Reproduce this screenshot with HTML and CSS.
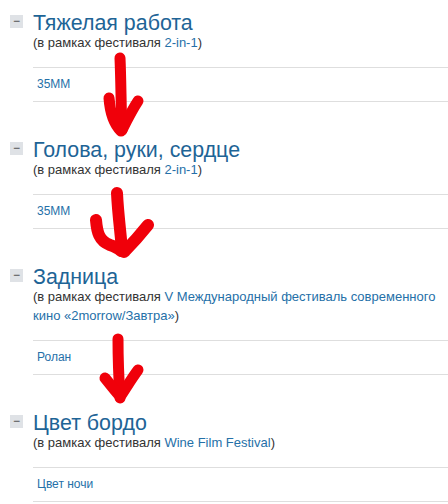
FILE: index.html
```html
<!DOCTYPE html>
<html lang="ru">
<head>
    <meta charset="UTF-8">
    <title>Фильмы</title>
    <link rel="stylesheet" href="styles.css">
</head>
<body>
<div class="page">
    <div class="film">
        <span class="toggle">−</span>
        <div class="film-body">
            <h2 class="film-title">Тяжелая работа</h2>
            <div class="film-fest">(в рамках фестиваля <a href="#">2-in-1</a>)</div>
            <ul class="related">
                <li><a href="#">35MM</a></li>
            </ul>
        </div>
    </div>
    <div class="film">
        <span class="toggle">−</span>
        <div class="film-body">
            <h2 class="film-title">Голова, руки, сердце</h2>
            <div class="film-fest">(в рамках фестиваля <a href="#">2-in-1</a>)</div>
            <ul class="related">
                <li><a href="#">35MM</a></li>
            </ul>
        </div>
    </div>
    <div class="film">
        <span class="toggle">−</span>
        <div class="film-body">
            <h2 class="film-title">Задница</h2>
            <div class="film-fest">(в рамках фестиваля <a href="#">V Международный фестиваль современного кино «2morrow/Завтра»</a>)</div>
            <ul class="related">
                <li><a href="#">Ролан</a></li>
            </ul>
        </div>
    </div>
    <div class="film">
        <span class="toggle">−</span>
        <div class="film-body">
            <h2 class="film-title">Цвет бордо</h2>
            <div class="film-fest">(в рамках фестиваля <a href="#">Wine Film Festival</a>)</div>
            <ul class="related">
                <li><a href="#">Цвет ночи</a></li>
            </ul>
        </div>
    </div>

    <!-- красные стрелки поверх -->
    <svg class="arrows" width="448" height="504" viewBox="0 0 448 504">
        <g fill="none" stroke="#f0000a" stroke-linecap="round" stroke-linejoin="round">
            <path stroke-width="11" d="M120 58 C121 80 121 108 122 130"/>
            <path stroke-width="11" d="M109 98 C110 112 114 124 121 131"/>
            <path stroke-width="11" d="M138 101 C132 110 127 120 122 130"/>

            <path stroke-width="12" d="M117 193 C118 215 121 235 122 251"/>
            <path stroke-width="12" d="M96 220 C97 232 99 241 110 245 C116 247 119 249 121 251"/>
            <path stroke-width="12" d="M148 225 C140 235 132 244 124 252"/>

            <path stroke-width="11" d="M118 339 C118 360 119 382 120 398"/>
            <path stroke-width="11" d="M105 378 C109 383 113 388 118 394"/>
            <path stroke-width="11" d="M138 370 C132 378 126 388 120 397"/>
        </g>
    </svg>
</div>
</body>
</html>
```

FILE: styles.css
```css
body {
    font-family: "Liberation Sans", Arial, sans-serif;
    background-color: #fff;
    color: #333;
    margin: 0;
    padding: 0;
    overflow: hidden;
}

.page {
    position: relative;
    padding: 13px 0 0 10px;
}

.film {
    display: flex;
    align-items: flex-start;
    margin-bottom: 38px;
}

.toggle {
    width: 13px;
    height: 13px;
    margin-top: 2px;
    margin-right: 10px;
    background-color: #dfe2e6;
    color: #444;
    font-size: 12px;
    line-height: 12px;
    text-align: center;
    flex-shrink: 0;
}

.film-body {
    flex: 1;
}

.film-title {
    margin: 0;
    font-size: 21.4px;
    font-weight: normal;
    line-height: 20px;
    color: #1e6496;
}

.film-fest {
    font-size: 13px;
    line-height: 19px;
}

.film-fest a {
    color: #2570a8;
    text-decoration: none;
}

.related {
    list-style: none;
    margin: 15px 0 0 0;
    padding: 0;
}

.related li {
    border-top: 1px solid #dedede;
    border-bottom: 1px solid #dedede;
    line-height: 33px;
    font-size: 12px;
    padding-left: 4px;
}

.related a {
    color: #2570a8;
    text-decoration: none;
}

.arrows {
    position: absolute;
    left: 0;
    top: 0;
    pointer-events: none;
}
```
